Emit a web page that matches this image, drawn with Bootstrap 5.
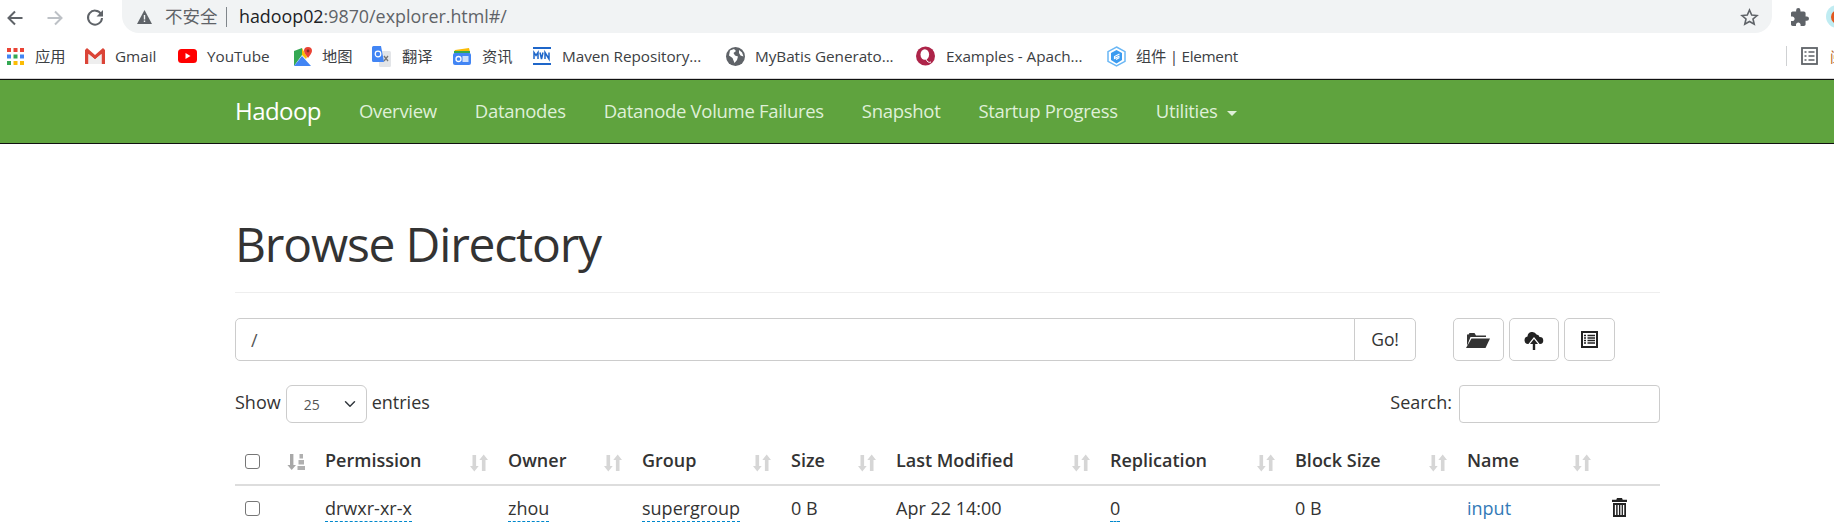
<!DOCTYPE html>
<html lang="en">
<head>
<meta charset="utf-8">
<title>Browsing HDFS</title>
<link href="https://cdn.jsdelivr.net/npm/bootstrap@5.3.0/dist/css/bootstrap.min.css" rel="stylesheet">
<style>
html,body{height:527px;overflow:hidden;background:#fff}
body{font-family:"Open Sans","Noto Sans CJK SC",sans-serif;color:#333;font-size:16px}
.cjk{font-family:"Open Sans","Noto Sans CJK SC",sans-serif}
.tabbar{height:33px;padding-left:6px;color:#5f6368}
.tool-slot{width:40px}
.addr{margin-left:-4px;width:1650px;flex:none;height:33px;background:#f1f3f4;border-radius:0 0 17px 17px;padding:0 13px 0 15px;font-size:17.85px}
.addr-warn{margin-right:13px;flex:none}
.addr-sec{font-family:"Noto Sans CJK SC",sans-serif;font-size:17.5px;width:52px;white-space:nowrap;color:#5f6368}
.addr-sep{width:1px;height:20px;background:#80868b;margin:0 12px 0 9px}
.addr-host{color:#202124}
.addr-rest{color:#5f6368}
.tb-right{margin-left:19px;gap:17px;min-width:0;flex:1 1 0;height:33px}
.avatar{width:23px;height:23px;border-radius:50%;background:#c0ecf2;flex:none;position:relative;overflow:hidden}
.avatar::after{content:"";position:absolute;left:5px;top:5px;width:14px;height:14px;border-radius:50%;background:#e2571e}
.bmbar{height:46px;display:grid;grid-template-columns:78px 93px 115px 79px 81px 80px 193px 190px 191px 679px 1fr;padding:2px 0 1px 7px;align-items:center;font-size:15.3px;color:#3c4043;white-space:nowrap;overflow:hidden;border-bottom:1px solid #d6d6d6}
.bm{display:flex;align-items:center;gap:10px}
.bm-w{gap:11px}
.bm svg{flex:none}
.bm-t{letter-spacing:-.05px}
.bm-el{letter-spacing:-.3px}
.bm-end{display:flex;align-items:center}
.bm-sep{width:1px;height:20px;background:#cfd1d3;margin-right:14px;flex:none}
.bm-read{margin-left:12px;font-size:14px;color:#b5651d;font-family:"Noto Sans CJK SC",sans-serif}
.topnav{background:#5fa33e;border-top:1px solid #111;border-bottom:1px solid #111;height:65px;padding:0 0 2px 235px;flex-wrap:nowrap;justify-content:flex-start}
.topnav .navbar-brand{color:#fff;font-size:24px;margin:0;padding:0;letter-spacing:-.55px;width:124px}
.topnav .navbar-nav{flex-direction:row}
.topnav .nav-link{color:#dff0d8;font-size:18.5px;padding:0;letter-spacing:-.3px}
.navcell{margin-right:38px}
.caret-mini{display:inline-block;width:0;height:0;border-left:5px solid transparent;border-right:5px solid transparent;border-top:5px solid #dff0d8;margin-left:9px;vertical-align:2px}
.wrap{width:1425px;margin-left:235px}
.pg-head{height:149px;border-bottom:1px solid #eee;padding-top:65px}
.pg-head h1{font-size:48px;line-height:70px;margin:0;font-weight:400;color:#333;letter-spacing:-1.2px;font-family:"Open Sans",sans-serif}
.pathrow{margin-top:25px;height:43px}
.pathgrp{width:1181px;height:43px}
.pathgrp .form-control{height:43px;font-size:18px;padding-left:15px;border-color:#ccc;color:#555;border-radius:5px 0 0 5px}
.pathgrp .btn{width:62px;font-size:17.5px;letter-spacing:-.2px;padding:0;border:1px solid #ccc;color:#333;border-radius:0 5px 5px 0}
.toolgrp{margin-left:37px;gap:5px}
.toolbtn{width:50.5px;height:43px;padding:0;border:1px solid #ccc;border-radius:5px;display:flex;align-items:center;justify-content:center}
.ctlrow{margin-top:24px;height:38px;font-size:18px}
.ctl-txt{margin-bottom:3px}
.lensel{width:81px;height:38px;font-size:14px;padding:0 0 0 17px;margin:0 5px;border-color:#ccc;color:#555;background-position:right 8px center}
.srch{width:201px;height:38px;margin-left:7px;border-color:#ccc;border-radius:4px}
.dirtab{table-layout:fixed;width:1425px;margin:24px 0 0;font-size:18px;color:#333}
.dirtab th,.dirtab td{padding:0 0 0 10px;border:0;color:#333;vertical-align:middle;background:none;box-shadow:none}
.dirtab thead th{height:38px;border-bottom:2px solid #ddd;font-weight:600;vertical-align:top;line-height:26px;padding-bottom:10px}
.dirtab td{height:46px}
.hcell{display:flex;align-items:center;justify-content:space-between;padding-right:10.500px}
.hcell svg{flex:none;margin-top:6px}
.hcell .chk{margin-top:4px}
.form-check-input.chk{width:15px;height:15px;display:block;border:1.4px solid #767676;border-radius:3px}
td .form-check-input.chk{margin:0}
.edit-lnk{color:#333;text-decoration:none;border-bottom:1px dashed #08c;padding-bottom:1px}
.name-lnk{color:#337ab7;text-decoration:none}
.trash-ic{display:block;margin-top:-4px}
</style>
</head>
<body>
<svg width="0" height="0" class="d-block">
  <defs>
    <symbol id="ic-sort" viewBox="0 0 18 18"><path fill="#d6d6d6" d="M2.500 1h3.600v11h2.600l-4.400 5.500L0 12h2.500zM11.900 17V6H9.300L13.700.5 18 6h-2.500v11z"/></symbol>
  </defs>
</svg>

<div class="tabbar d-flex align-items-start">
  <div class="d-flex align-items-center" style="height:33px">
    <div class="tool-slot"><svg width="18" height="18" viewBox="0 0 18 18"><path d="M16.500 9H3M9 2.500 2.500 9 9 15.500" fill="none" stroke="#5f6368" stroke-width="2"/></svg></div>
    <div class="tool-slot"><svg width="18" height="18" viewBox="0 0 18 18"><path d="M1.500 9H15M9 2.500 15.500 9 9 15.500" fill="none" stroke="#bdc1c6" stroke-width="2"/></svg></div>
    <div class="tool-slot"><svg width="18" height="18" viewBox="0 0 18 18"><path d="M15 5A7 7 0 1 0 16 9" fill="none" stroke="#5f6368" stroke-width="2"/><path d="M17 1v6.500h-6.500z" fill="#5f6368"/></svg></div>
  </div>
  <div class="addr d-flex align-items-center">
    <svg class="addr-warn" width="15" height="14" viewBox="0 0 15 14"><path d="M7.500 0 15 14H0z" fill="#5f6368"/><path d="M6.800 5h1.400v4.500H6.800zM6.800 10.500h1.400V12H6.800z" fill="#f1f3f4"/></svg>
    <span class="addr-sec">不安全</span>
    <span class="addr-sep"></span>
    <span><span class="addr-host">hadoop02</span><span class="addr-rest">:9870/explorer.html#/</span></span>
    <svg class="ms-auto" width="19" height="18" viewBox="0 0 19 18"><path d="m9.500 2 2.200 5 5.300.5-4 3.500 1.200 5.200-4.700-2.700-4.700 2.700L6 11 2 7.500 7.300 7z" fill="none" stroke="#5f6368" stroke-width="1.600"/></svg>
  </div>
  <div class="tb-right d-flex align-items-center">
    <svg class="flex-shrink-0" width="18" height="18" viewBox="2 1 21 21"><path d="M20.500 11H19V7c0-1.100-.9-2-2-2h-4V3.500a2.500 2.500 0 0 0-5 0V5H4c-1.100 0-1.990.9-1.990 2v3.800H3.500c1.490 0 2.700 1.210 2.700 2.700s-1.210 2.700-2.700 2.700H2V20c0 1.100.9 2 2 2h3.800v-1.500c0-1.490 1.210-2.700 2.700-2.700 1.490 0 2.700 1.210 2.700 2.700V22H17c1.100 0 2-.9 2-2v-4h1.500a2.500 2.500 0 0 0 0-5z" fill="#5f6368"/></svg>
    <span class="avatar"></span>
  </div>
</div>

<div class="bmbar">
  <div class="bm bm-w"><svg width="17" height="17" viewBox="0 0 17 17"><g><rect x="0" y="0" width="4" height="4" fill="#ea4335"/><rect x="6.500" y="0" width="4" height="4" fill="#ea4335"/><rect x="13" y="0" width="4" height="4" fill="#ea4335"/><rect x="0" y="6.500" width="4" height="4" fill="#4285f4"/><rect x="6.500" y="6.500" width="4" height="4" fill="#34a853"/><rect x="13" y="6.500" width="4" height="4" fill="#4285f4"/><rect x="0" y="13" width="4" height="4" fill="#34a853"/><rect x="6.500" y="13" width="4" height="4" fill="#fbbc05"/><rect x="13" y="13" width="4" height="4" fill="#fbbc05"/></g></svg><span class="bm-t cjk">应用</span></div>
  <div class="bm"><svg width="20" height="16" viewBox="0 0 20 16"><path d="M0 2 2 0l8 7 8-7 2 2v14h-3.500V6L10 11.500 3.500 6v10H0z" fill="#db4437"/><path d="M3.500 6 10 11.500 16.500 6v10h-13z" fill="#eee"/></svg><span class="bm-t">Gmail</span></div>
  <div class="bm"><svg width="19" height="14" viewBox="0 0 19 14"><rect width="19" height="14" rx="3.500" fill="#f00"/><path d="m7.500 4 5 3-5 3z" fill="#fff"/></svg><span class="bm-t">YouTube</span></div>
  <div class="bm"><svg width="19" height="19" viewBox="0 0 19 19"><path d="M1 4 9 1v7L1 19z" fill="#34a853"/><path d="M1 19 9 9l9 10z" fill="#4285f4"/><path d="M9 1v7l4 4 1-2z" fill="#fbbc05"/><path d="M15 0a4 4 0 0 1 4 4c0 2.500-3 5-4 7-1-2-4-4.500-4-7a4 4 0 0 1 4-4z" fill="#ea4335"/><circle cx="15" cy="4" r="1.400" fill="#8a2a20"/></svg><span class="bm-t cjk">地图</span></div>
  <div class="bm bm-w"><svg width="19" height="21" viewBox="0 0 19 21"><rect x="7" y="5" width="12" height="16" rx="1.500" fill="#e3e5e8"/><path d="M0 1.500A1.500 1.500 0 0 1 1.500 0H9l3 16H1.500A1.500 1.500 0 0 1 0 14.500z" fill="#4285f4"/><circle cx="6" cy="8" r="2.800" fill="none" stroke="#fff" stroke-width="1.200"/><path d="m12 10 4 5m0-5-4 5" stroke="#777" stroke-width="1.300"/></svg><span class="bm-t cjk">翻译</span></div>
  <div class="bm bm-w"><svg width="18" height="17" viewBox="0 0 18 17"><path d="M2 2 16 0l1 4H1z" fill="#fbbc05"/><rect x="1" y="3" width="16" height="2.500" fill="#34a853"/><rect y="5" width="18" height="12" rx="2" fill="#4285f4"/><rect x="9.500" y="8" width="6" height="6" fill="#cfe0fb"/><circle cx="5.500" cy="11" r="2.500" fill="none" stroke="#fff" stroke-width="1.300"/></svg><span class="bm-t cjk">资讯</span></div>
  <div class="bm bm-w"><svg width="18" height="18" viewBox="0 0 18 18"><rect width="18" height="2" fill="#1e66c9"/><rect y="16" width="18" height="2" fill="#1e66c9"/><path d="M1 12V5.500l2 3 2-3V12M7 5.500l1.500 6.500L10 5.500M12 12V5.500l4 6.500V5.500" fill="none" stroke="#1e66c9" stroke-width="1.500"/></svg><span class="bm-t">Maven Repository...</span></div>
  <div class="bm"><svg width="19" height="19" viewBox="0 0 19 19"><circle cx="9.500" cy="9.500" r="9.500" fill="#5f6368"/><path d="M4 3.500 8 2l2 2-2.500 2L9 8.500l3 1-1 3.500-2.500 3L6.500 11 3 8.500zM13 3l3 2.500 1.500 4-3-1L13 6z" fill="#fff"/></svg><span class="bm-t">MyBatis Generato...</span></div>
  <div class="bm bm-w"><svg width="19" height="20" viewBox="0 0 19 20"><circle cx="9.500" cy="10" r="9.500" fill="#ad2449"/><ellipse cx="8.800" cy="8.500" rx="4.300" ry="5.300" fill="#fff"/><path d="M10 13c1 3 3 4 5 3" fill="none" stroke="#fff" stroke-width="1"/></svg><span class="bm-t">Examples - Apach...</span></div>
  <div class="bm"><svg width="19" height="21" viewBox="0 0 19 21"><path d="M9.500 1 18 5.700v9.600L9.500 20 1 15.300V5.700z" fill="#fff" stroke="#6ab7f5" stroke-width="1.500"/><path d="M9.500 4 15 7v7l-5.500 3.500L4 14V7z" fill="#3a9bf0"/><path d="M12.500 8 7.500 10.500v2l5-2.500M12.500 11.500l-3.500 2" stroke="#fff" stroke-width="1.200" fill="none"/></svg><span class="bm-el cjk">组件 | Element</span></div>
  <div class="bm-end"><span class="bm-sep"></span><svg class="flex-shrink-0" width="17" height="18" viewBox="0 0 17 18"><rect x="1" y="1" width="15" height="16" fill="none" stroke="#5f6368" stroke-width="1.800"/><path d="M3.500 5h2M7.500 5h6M3.500 9h2M7.500 9h6M3.500 13h2M7.500 13h6" stroke="#5f6368" stroke-width="1.500"/></svg><span class="bm-read">阅读</span></div>
</div>

<nav class="navbar topnav">
  <a class="navbar-brand" href="#">Hadoop</a>
  <ul class="navbar-nav">
    <li class="nav-item navcell"><a class="nav-link" href="#">Overview</a></li>
    <li class="nav-item navcell"><a class="nav-link" href="#">Datanodes</a></li>
    <li class="nav-item navcell"><a class="nav-link" href="#">Datanode Volume Failures</a></li>
    <li class="nav-item navcell"><a class="nav-link" href="#">Snapshot</a></li>
    <li class="nav-item navcell"><a class="nav-link" href="#">Startup Progress</a></li>
    <li class="nav-item"><a class="nav-link" href="#">Utilities<span class="caret-mini"></span></a></li>
  </ul>
</nav>

<main class="wrap">
  <div class="pg-head"><h1>Browse Directory</h1></div>

  <div class="pathrow d-flex">
    <div class="input-group pathgrp">
      <input type="text" class="form-control" value="/">
      <button class="btn bg-white" type="button">Go!</button>
    </div>
    <div class="toolgrp d-flex">
      <button class="btn toolbtn" type="button"><svg width="24" height="18" viewBox="0 0 24 18"><path d="M1 3.500V15L4.500 6H20V4.500H10L8.500 2h-5L2.500 3.500z" fill="#333"/><path d="M5.500 7.500H24L19.500 17H0z" fill="#333"/></svg></button>
      <button class="btn toolbtn" type="button"><svg width="20" height="20" viewBox="0 0 20 20"><path d="M4 14A3.800 3.800 0 0 1 3.500 6.500 4.800 4.800 0 0 1 12.500 4.500a3 3 0 0 1 3 2.500 3.500 3.500 0 0 1 .5 7z" fill="#222"/><path d="M10 7 16 14.500H13V20H7V14.500H4z" fill="#fff"/><path d="M10 9 14 14h-2.800v6H8.800v-6H6z" fill="#222"/></svg></button>
      <button class="btn toolbtn" type="button"><svg width="17" height="17" viewBox="0 0 17 17"><rect width="17" height="17" fill="#222"/><rect x="2" y="2" width="13" height="13" fill="#fff"/><path d="M3 4.500h2M6.500 4.500H14M3 7h2M6.500 7H14M3 9.500h2M6.500 9.500H14M3 12h2M6.500 12H14" stroke="#222" stroke-width="1.300"/></svg></button>
    </div>
  </div>

  <div class="ctlrow d-flex align-items-center justify-content-between">
    <div class="d-flex align-items-center"><span class="ctl-txt">Show</span><select class="form-select lensel"><option>25</option></select><span class="ctl-txt">entries</span></div>
    <div class="d-flex align-items-center"><span class="ctl-txt">Search:</span><input type="search" class="form-control srch"></div>
  </div>

  <table class="table dirtab">
    <colgroup>
      <col style="width:80px"><col style="width:183px"><col style="width:134px"><col style="width:149px"><col style="width:105px"><col style="width:214px"><col style="width:185px"><col style="width:172px"><col style="width:144px"><col style="width:59px">
    </colgroup>
    <thead>
      <tr>
        <th><div class="hcell"><input class="form-check-input chk" type="checkbox"><svg width="18" height="18" viewBox="0 0 18 18"><path fill="#a8a8a8" d="M3 1h3.400v11H9l-4.300 5L.4 12H3z"/><path fill="#b0b0b0" d="M12.500 1h3.500v4.500h-3.500zM11.500 7h5.500v4.500h-5.500zM10.500 13h7.500v4h-7.500z"/></svg></div></th>
        <th><div class="hcell">Permission<svg width="18" height="18"><use href="#ic-sort"/></svg></div></th>
        <th><div class="hcell">Owner<svg width="18" height="18"><use href="#ic-sort"/></svg></div></th>
        <th><div class="hcell">Group<svg width="18" height="18"><use href="#ic-sort"/></svg></div></th>
        <th><div class="hcell">Size<svg width="18" height="18"><use href="#ic-sort"/></svg></div></th>
        <th><div class="hcell">Last Modified<svg width="18" height="18"><use href="#ic-sort"/></svg></div></th>
        <th><div class="hcell">Replication<svg width="18" height="18"><use href="#ic-sort"/></svg></div></th>
        <th><div class="hcell">Block Size<svg width="18" height="18"><use href="#ic-sort"/></svg></div></th>
        <th><div class="hcell">Name<svg width="18" height="18"><use href="#ic-sort"/></svg></div></th>
        <th></th>
      </tr>
    </thead>
    <tbody>
      <tr>
        <td><input class="form-check-input chk" type="checkbox"></td>
        <td><a class="edit-lnk" href="#">drwxr-xr-x</a></td>
        <td><a class="edit-lnk" href="#">zhou</a></td>
        <td><a class="edit-lnk" href="#">supergroup</a></td>
        <td>0 B</td>
        <td>Apr 22 14:00</td>
        <td><a class="edit-lnk" href="#">0</a></td>
        <td>0 B</td>
        <td><a class="name-lnk" href="#">input</a></td>
        <td><svg class="trash-ic" width="17" height="20" viewBox="0 0 17 20"><path d="M6 1h5l.7 1.800H16V5H1V2.800h4.300z" fill="#222"/><path d="M2 6h13v14H2z" fill="#222"/><path d="M4.500 8v10M7.300 8v10M10 8v10M12.600 8v10" stroke="#fff" stroke-width="1.300"/></svg></td>
      </tr>
    </tbody>
  </table>
</main>
<script src="https://cdn.jsdelivr.net/npm/bootstrap@5.3.0/dist/js/bootstrap.bundle.min.js"></script>
</body>
</html>
